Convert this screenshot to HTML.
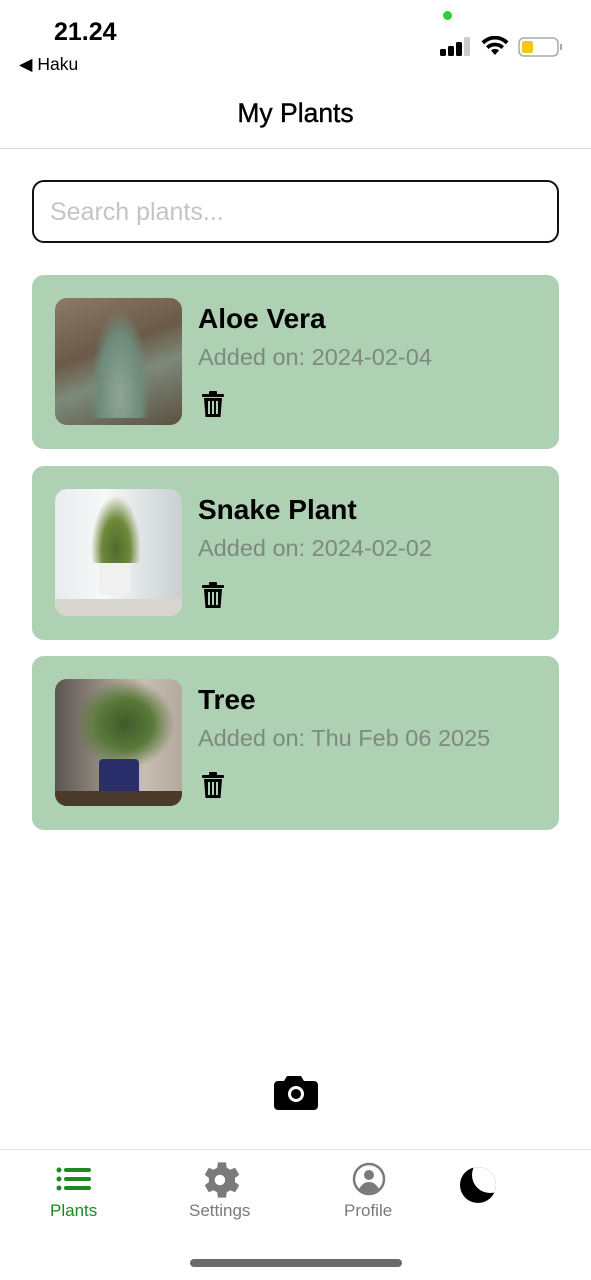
<!DOCTYPE html>
<html><head><meta charset="utf-8"><style>
*{margin:0;padding:0;box-sizing:border-box}
body{width:591px;height:1280px;background:#fff;font-family:"Liberation Sans",sans-serif;position:relative;overflow:hidden}
.abs{position:absolute}
.card{position:absolute;left:32px;width:527px;height:174px;background:#aed0b3;border-radius:12px}
.img{position:absolute;left:23px;top:23px;width:127px;height:127px;border-radius:12px;overflow:hidden}
.t{position:absolute;left:166px;top:28px;font-size:28px;font-weight:bold;color:#000}
.d{position:absolute;left:166px;top:69px;font-size:23.5px;color:#7d8a80}
.tr{position:absolute;left:170px;top:116px}
</style></head><body>
<div class="abs" style="left:54px;top:18px;font-size:25px;font-weight:bold">21.24</div>
<div class="abs" style="left:19px;top:54px;font-size:17.5px">◀ Haku</div>
<div class="abs" style="left:443px;top:11px;width:9px;height:9px;border-radius:50%;background:#2ecc40"></div>
<svg class="abs" style="left:440px;top:36px" width="125" height="22">
<rect x="0" y="13" width="6" height="7" rx="1.5"/><rect x="8" y="10" width="6" height="10" rx="1.5"/><rect x="16" y="6" width="6" height="14" rx="1.5"/><rect x="24" y="1" width="6" height="19" rx="1.5" fill="#ccc"/>
<path d="M55 19l-4-4.6a6 6 0 0 1 8 0z M46 10.2a13 13 0 0 1 18 0l-2.6 2.8a9 9 0 0 0-12.8 0z M41.5 5.4a19 19 0 0 1 27 0l-2.6 2.8a15 15 0 0 0-21.8 0z"/>
<rect x="79" y="2" width="39" height="18" rx="5" fill="none" stroke="#aaa" stroke-width="1.5"/><rect x="82" y="5" width="11" height="12" rx="2" fill="#f5c518"/><rect x="120" y="8" width="2" height="6" fill="#aaa"/>
</svg>
<div class="abs" style="left:0;width:591px;top:98px;text-align:center;font-size:26.5px;color:#000;-webkit-text-stroke:0.4px #000">My Plants</div>
<div class="abs" style="left:0;top:148px;width:591px;height:1px;background:#ddd"></div>
<div class="abs" style="left:32px;top:180px;width:527px;height:63px;border:2px solid #111;border-radius:12px;padding:16px 16px;font-size:25px;color:#c4c4c4;line-height:28px">Search plants...</div>
<svg width="0" height="0" style="position:absolute"><defs><g id="trash"><rect x="0" y="3" width="22" height="3" rx="1"/><rect x="7" y="0" width="8" height="4" rx="1"/><path d="M2 7h18l-1.5 19h-15z"/><rect x="6" y="10" width="2" height="13" fill="#aed0b3"/><rect x="10" y="10" width="2" height="13" fill="#aed0b3"/><rect x="14" y="10" width="2" height="13" fill="#aed0b3"/></g></defs></svg>
<div class="card" style="top:275px"><div class="img" style="background:linear-gradient(160deg,#8a7a66,#6b5a48 40%,#7c8a7a 60%,#5d5042)"><div style="position:absolute;left:35px;top:10px;width:60px;height:110px;background:radial-gradient(ellipse at 50% 80%,#8ea596,#6f8a7a 50%,transparent 70%)"></div></div><div class="t">Aloe Vera</div><div class="d">Added on: 2024-02-04</div><svg class="tr" width="22" height="27"><use href="#trash"/></svg></div>
<div class="card" style="top:466px"><div class="img" style="background:linear-gradient(90deg,#e8ecee,#f7f8f8 40%,#dfe3e4 70%,#c9cfd1)"><div style="position:absolute;left:44px;top:70px;width:32px;height:36px;background:#f0f0f0;border-radius:2px 2px 6px 6px"></div><div style="position:absolute;left:36px;top:6px;width:50px;height:68px;background:radial-gradient(ellipse at 50% 80%,#4e6b2e,#6f8a3a 40%,transparent 70%)"></div><div style="position:absolute;left:0;top:110px;width:127px;height:17px;background:#d9d6d0"></div></div><div class="t">Snake Plant</div><div class="d">Added on: 2024-02-02</div><svg class="tr" width="22" height="27"><use href="#trash"/></svg></div>
<div class="card" style="top:656px"><div class="img" style="background:linear-gradient(90deg,#5a5550,#8a8278 30%,#c8bdb3 70%,#b3a99e)"><div style="position:absolute;left:20px;top:0;width:100px;height:90px;background:radial-gradient(ellipse at 50% 50%,#3f5a2a,#5a7a3a 40%,transparent 70%)"></div><div style="position:absolute;left:44px;top:80px;width:40px;height:38px;background:#2a2e6a;border-radius:4px"></div><div style="position:absolute;left:0;top:112px;width:127px;height:15px;background:#4a3a2a"></div></div><div class="t">Tree</div><div class="d">Added on: Thu Feb 06 2025</div><svg class="tr" width="22" height="27"><use href="#trash"/></svg></div>
<svg class="abs" style="left:273px;top:1074px" width="46" height="37"><path d="M14 2h14l3 5h10a4 4 0 0 1 4 4v21a4 4 0 0 1-4 4H5a4 4 0 0 1-4-4V11a4 4 0 0 1 4-4h6z"/><circle cx="23" cy="20" r="8" fill="#fff"/><circle cx="23" cy="20" r="5"/></svg>
<div class="abs" style="left:0;top:1149px;width:591px;height:1px;background:#e3e3e3"></div>
<svg class="abs" style="left:56px;top:1167px" width="36" height="25" fill="#1e8a1e"><circle cx="3" cy="3" r="2.5"/><circle cx="3" cy="12" r="2.5"/><circle cx="3" cy="21" r="2.5"/><rect x="8" y="1" width="27" height="4" rx="2"/><rect x="8" y="10" width="27" height="4" rx="2"/><rect x="8" y="19" width="27" height="4" rx="2"/></svg>
<div class="abs" style="left:50px;top:1201px;font-size:17px;color:#1e8a1e">Plants</div>
<svg class="abs" style="left:201px;top:1159px" width="42" height="42" viewBox="2 2 20 20"><path fill="#7a7a7a" d="M19.14 12.94a7 7 0 0 0 0-1.88l2.03-1.58-1.92-3.32-2.39.96a7 7 0 0 0-1.62-.94L14.9 3.6h-3.84l-.36 2.58a7 7 0 0 0-1.62.94l-2.39-.96-1.92 3.32 2.03 1.58a7 7 0 0 0 0 1.88l-2.03 1.58 1.92 3.32 2.39-.96c.5.39 1.040.7 1.62.94l.36 2.58h3.840l.36-2.58a7 7 0 0 0 1.62-.94l2.39.96 1.92-3.32zM12 14.5a2.5 2.5 0 1 1 0-5 2.5 2.5 0 0 1 0 5z" transform="translate(-1 0)"/></svg>
<div class="abs" style="left:189px;top:1201px;font-size:17px;color:#7a7a7a">Settings</div>
<svg class="abs" style="left:352px;top:1162px" width="34" height="34"><circle cx="17" cy="17" r="15" fill="none" stroke="#7a7a7a" stroke-width="2.5"/><circle cx="17" cy="13" r="5" fill="#7a7a7a"/><path d="M7 27c3-5 6-7 10-7s7 2 10 7a15 15 0 0 1-20 0z" fill="#7a7a7a"/></svg>
<div class="abs" style="left:344px;top:1201px;font-size:17px;color:#7a7a7a">Profile</div>
<div class="abs" style="left:460px;top:1167px;width:36px;height:36px;border-radius:50%;background:#000;overflow:hidden"><div style="position:absolute;left:12px;top:-10px;width:36px;height:36px;border-radius:50%;background:#fff"></div></div>
<div class="abs" style="left:190px;top:1259px;width:212px;height:8px;border-radius:4px;background:#6b6b6b"></div>
</body></html>
